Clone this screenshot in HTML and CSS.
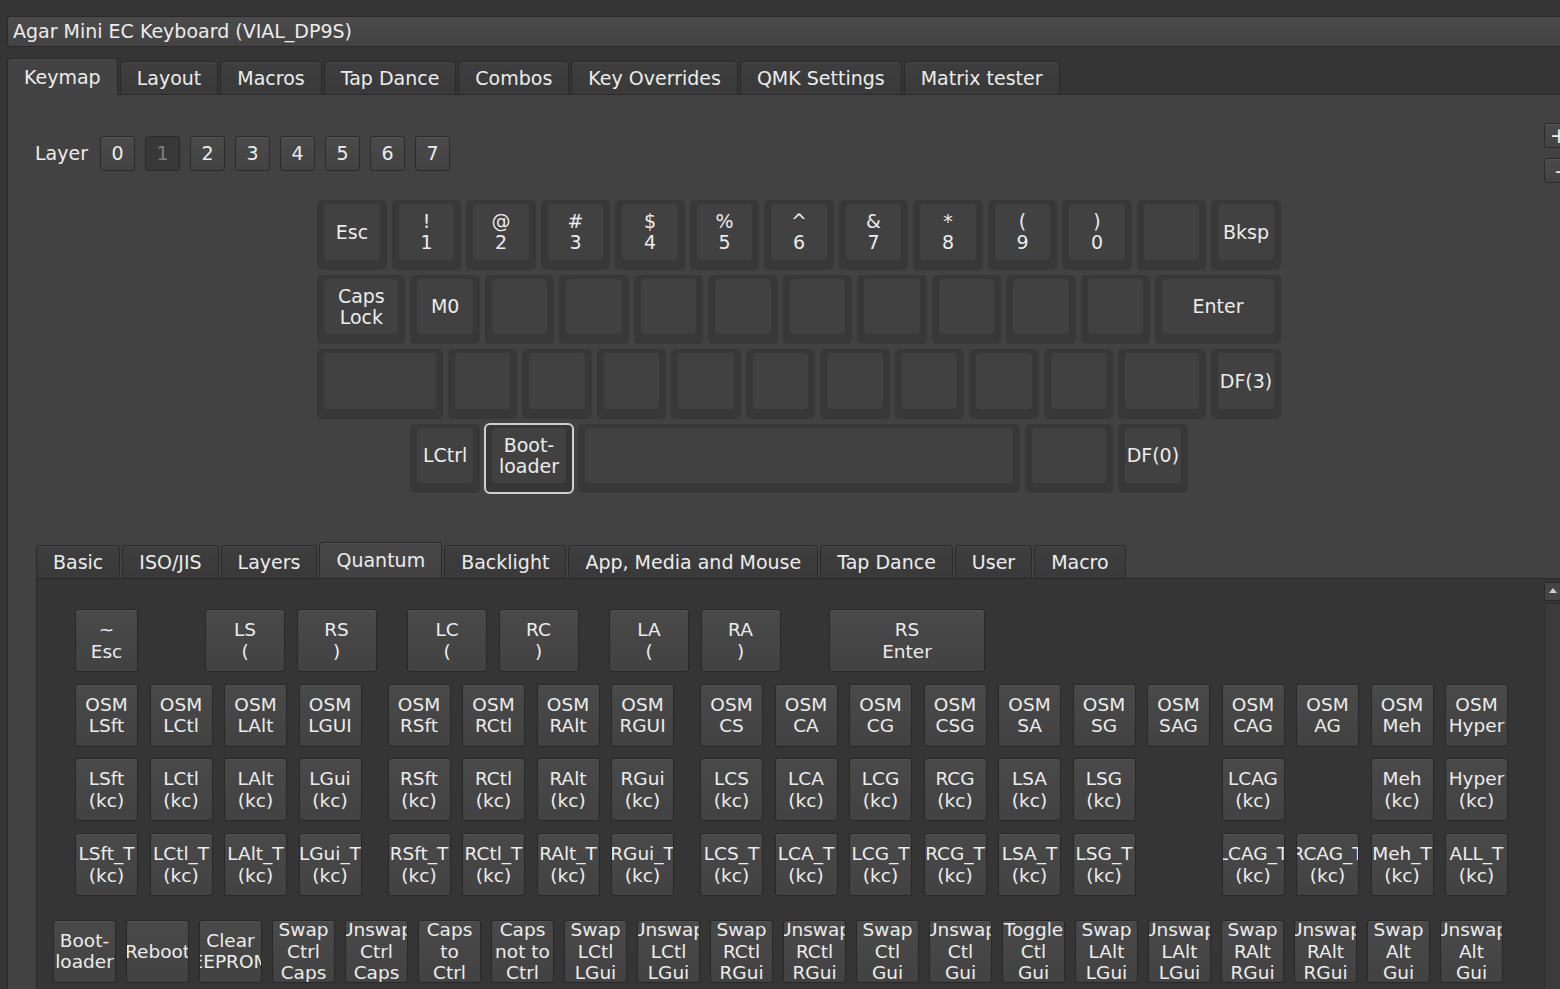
FILE: index.html
```html
<!DOCTYPE html>
<html lang="en">
  <head>
    <meta charset="UTF-8" />
    <meta name="viewport" content="width=device-width, initial-scale=1.0" />
    <title>Vial</title>
    <link rel="stylesheet" href="styles.css">
  </head>
  <body>
    <div class="app">
      <div class="device-select">Agar Mini EC Keyboard (VIAL_DP9S)</div>

      <div class="tabs main-tabs">
        <div class="tab active">Keymap</div>
        <div class="tab">Layout</div>
        <div class="tab">Macros</div>
        <div class="tab">Tap Dance</div>
        <div class="tab">Combos</div>
        <div class="tab">Key Overrides</div>
        <div class="tab">QMK Settings</div>
        <div class="tab">Matrix tester</div>
      </div>

      <div class="pane">
        <div class="layer-row">
          <div class="layers">
            <span class="layer-label">Layer</span>
            <div class="layer-btn">0</div>
            <div class="layer-btn current">1</div>
            <div class="layer-btn">2</div>
            <div class="layer-btn">3</div>
            <div class="layer-btn">4</div>
            <div class="layer-btn">5</div>
            <div class="layer-btn">6</div>
            <div class="layer-btn">7</div>
          </div>
          <div class="zoom">
            <div class="zoom-btn">+</div>
            <div class="zoom-btn">-</div>
          </div>
        </div>

        <!-- keyboard layout, 1u = 74.5px -->
        <div class="keyboard">
          <div class="krow">
            <div class="key"><div class="cap">Esc</div></div>
            <div class="key"><div class="cap">!<br>1</div></div>
            <div class="key"><div class="cap">@<br>2</div></div>
            <div class="key"><div class="cap">#<br>3</div></div>
            <div class="key"><div class="cap">$<br>4</div></div>
            <div class="key"><div class="cap">%<br>5</div></div>
            <div class="key"><div class="cap">^<br>6</div></div>
            <div class="key"><div class="cap">&amp;<br>7</div></div>
            <div class="key"><div class="cap">*<br>8</div></div>
            <div class="key"><div class="cap">(<br>9</div></div>
            <div class="key"><div class="cap">)<br>0</div></div>
            <div class="key"><div class="cap"></div></div>
            <div class="key"><div class="cap">Bksp</div></div>
          </div>
          <div class="krow">
            <div class="key u125"><div class="cap">Caps<br>Lock</div></div>
            <div class="key"><div class="cap">M0</div></div>
            <div class="key"><div class="cap"></div></div>
            <div class="key"><div class="cap"></div></div>
            <div class="key"><div class="cap"></div></div>
            <div class="key"><div class="cap"></div></div>
            <div class="key"><div class="cap"></div></div>
            <div class="key"><div class="cap"></div></div>
            <div class="key"><div class="cap"></div></div>
            <div class="key"><div class="cap"></div></div>
            <div class="key"><div class="cap"></div></div>
            <div class="key u175"><div class="cap">Enter</div></div>
          </div>
          <div class="krow">
            <div class="key u175"><div class="cap"></div></div>
            <div class="key"><div class="cap"></div></div>
            <div class="key"><div class="cap"></div></div>
            <div class="key"><div class="cap"></div></div>
            <div class="key"><div class="cap"></div></div>
            <div class="key"><div class="cap"></div></div>
            <div class="key"><div class="cap"></div></div>
            <div class="key"><div class="cap"></div></div>
            <div class="key"><div class="cap"></div></div>
            <div class="key"><div class="cap"></div></div>
            <div class="key u125"><div class="cap"></div></div>
            <div class="key"><div class="cap">DF(3)</div></div>
          </div>
          <div class="krow offset">
            <div class="key"><div class="cap">LCtrl</div></div>
            <div class="key u125 sel"><div class="cap">Boot-<br>loader</div></div>
            <div class="key u6"><div class="cap"></div></div>
            <div class="key u125"><div class="cap"></div></div>
            <div class="key"><div class="cap">DF(0)</div></div>
          </div>
        </div>

        <div class="picker">
          <div class="tabs sub-tabs">
            <div class="tab">Basic</div>
            <div class="tab">ISO/JIS</div>
            <div class="tab">Layers</div>
            <div class="tab active">Quantum</div>
            <div class="tab">Backlight</div>
            <div class="tab">App, Media and Mouse</div>
            <div class="tab">Tap Dance</div>
            <div class="tab">User</div>
            <div class="tab">Macro</div>
          </div>
          <div class="picker-pane">
            <div class="picker-body">
              <div class="qrow first">
                <div class="qk"><span>~<br>Esc</span></div>
                <div class="qk w80 m-ls"><span>LS<br>(</span></div>
                <div class="qk w80"><span>RS<br>)</span></div>
                <div class="qk w80 m-grp"><span>LC<br>(</span></div>
                <div class="qk w80"><span>RC<br>)</span></div>
                <div class="qk w80 m-grp"><span>LA<br>(</span></div>
                <div class="qk w80"><span>RA<br>)</span></div>
                <div class="qk w156 m-ent"><span>RS<br>Enter</span></div>
              </div>
              <div class="qrow">
                <div class="qk"><span>OSM<br>LSft</span></div>
                <div class="qk"><span>OSM<br>LCtl</span></div>
                <div class="qk"><span>OSM<br>LAlt</span></div>
                <div class="qk"><span>OSM<br>LGUI</span></div>
                <div class="qk gs"><span>OSM<br>RSft</span></div>
                <div class="qk"><span>OSM<br>RCtl</span></div>
                <div class="qk"><span>OSM<br>RAlt</span></div>
                <div class="qk"><span>OSM<br>RGUI</span></div>
                <div class="qk gs"><span>OSM<br>CS</span></div>
                <div class="qk"><span>OSM<br>CA</span></div>
                <div class="qk"><span>OSM<br>CG</span></div>
                <div class="qk"><span>OSM<br>CSG</span></div>
                <div class="qk"><span>OSM<br>SA</span></div>
                <div class="qk"><span>OSM<br>SG</span></div>
                <div class="qk"><span>OSM<br>SAG</span></div>
                <div class="qk"><span>OSM<br>CAG</span></div>
                <div class="qk"><span>OSM<br>AG</span></div>
                <div class="qk"><span>OSM<br>Meh</span></div>
                <div class="qk"><span>OSM<br>Hyper</span></div>
              </div>
              <div class="qrow">
                <div class="qk"><span>LSft<br>(kc)</span></div>
                <div class="qk"><span>LCtl<br>(kc)</span></div>
                <div class="qk"><span>LAlt<br>(kc)</span></div>
                <div class="qk"><span>LGui<br>(kc)</span></div>
                <div class="qk gs"><span>RSft<br>(kc)</span></div>
                <div class="qk"><span>RCtl<br>(kc)</span></div>
                <div class="qk"><span>RAlt<br>(kc)</span></div>
                <div class="qk"><span>RGui<br>(kc)</span></div>
                <div class="qk gs"><span>LCS<br>(kc)</span></div>
                <div class="qk"><span>LCA<br>(kc)</span></div>
                <div class="qk"><span>LCG<br>(kc)</span></div>
                <div class="qk"><span>RCG<br>(kc)</span></div>
                <div class="qk"><span>LSA<br>(kc)</span></div>
                <div class="qk"><span>LSG<br>(kc)</span></div>
                <div class="qk blank"></div>
                <div class="qk"><span>LCAG<br>(kc)</span></div>
                <div class="qk blank"></div>
                <div class="qk"><span>Meh<br>(kc)</span></div>
                <div class="qk"><span>Hyper<br>(kc)</span></div>
              </div>
              <div class="qrow">
                <div class="qk"><span>LSft_T<br>(kc)</span></div>
                <div class="qk"><span>LCtl_T<br>(kc)</span></div>
                <div class="qk"><span>LAlt_T<br>(kc)</span></div>
                <div class="qk"><span>LGui_T<br>(kc)</span></div>
                <div class="qk gs"><span>RSft_T<br>(kc)</span></div>
                <div class="qk"><span>RCtl_T<br>(kc)</span></div>
                <div class="qk"><span>RAlt_T<br>(kc)</span></div>
                <div class="qk"><span>RGui_T<br>(kc)</span></div>
                <div class="qk gs"><span>LCS_T<br>(kc)</span></div>
                <div class="qk"><span>LCA_T<br>(kc)</span></div>
                <div class="qk"><span>LCG_T<br>(kc)</span></div>
                <div class="qk"><span>RCG_T<br>(kc)</span></div>
                <div class="qk"><span>LSA_T<br>(kc)</span></div>
                <div class="qk"><span>LSG_T<br>(kc)</span></div>
                <div class="qk blank"></div>
                <div class="qk"><span>LCAG_T<br>(kc)</span></div>
                <div class="qk"><span>RCAG_T<br>(kc)</span></div>
                <div class="qk"><span>Meh_T<br>(kc)</span></div>
                <div class="qk"><span>ALL_T<br>(kc)</span></div>
              </div>
              <div class="qrow magic">
                <div class="qk"><span>Boot-<br>loader</span></div>
                <div class="qk"><span>Reboot</span></div>
                <div class="qk"><span>Clear<br>EEPROM</span></div>
                <div class="qk"><span>Swap<br>Ctrl<br>Caps</span></div>
                <div class="qk"><span>Unswap<br>Ctrl<br>Caps</span></div>
                <div class="qk"><span>Caps<br>to<br>Ctrl</span></div>
                <div class="qk"><span>Caps<br>not to<br>Ctrl</span></div>
                <div class="qk"><span>Swap<br>LCtl<br>LGui</span></div>
                <div class="qk"><span>Unswap<br>LCtl<br>LGui</span></div>
                <div class="qk"><span>Swap<br>RCtl<br>RGui</span></div>
                <div class="qk"><span>Unswap<br>RCtl<br>RGui</span></div>
                <div class="qk"><span>Swap<br>Ctl<br>Gui</span></div>
                <div class="qk"><span>Unswap<br>Ctl<br>Gui</span></div>
                <div class="qk"><span>Toggle<br>Ctl<br>Gui</span></div>
                <div class="qk"><span>Swap<br>LAlt<br>LGui</span></div>
                <div class="qk"><span>Unswap<br>LAlt<br>LGui</span></div>
                <div class="qk"><span>Swap<br>RAlt<br>RGui</span></div>
                <div class="qk"><span>Unswap<br>RAlt<br>RGui</span></div>
                <div class="qk"><span>Swap<br>Alt<br>Gui</span></div>
                <div class="qk"><span>Unswap<br>Alt<br>Gui</span></div>
              </div>
            </div>
            <div class="scrollbar">
              <div class="sb-up"></div>
              <div class="sb-track"></div>
            </div>
          </div>
        </div>
      </div>
    </div>
  </body>
</html>
```

FILE: styles.css
```css
body {
  margin: 0;
  width: 1560px;
  height: 989px;
  overflow: hidden;
  background: #353535;
  color: #ececec;
  font-family: "DejaVu Sans", "Noto Sans", sans-serif;
  font-size: 19px;
}
.app {
  width: 1600px;
  padding: 16px 0 0 7px;
}
.device-select {
  width: 1600px;
  height: 31px;
  line-height: 29px;
  box-sizing: border-box;
  padding-left: 5px;
  border: 1px solid #2a2a2a;
  border-radius: 3px;
  background: linear-gradient(#4b4b4b, #434343);
  white-space: nowrap;
}

/* tab bars */
.tabs {
  display: flex;
  align-items: flex-end;
  gap: 2px;
  height: 36px;
}
.main-tabs {
  margin-top: 11px;
}
.tab {
  height: 33px;
  line-height: 32px;
  padding: 0 16px;
  box-sizing: border-box;
  border: 1px solid #2a2a2a;
  border-bottom: none;
  border-radius: 4px 4px 0 0;
  background: linear-gradient(#3e3e3e, #393939);
  white-space: nowrap;
  box-shadow: inset 0 1px 0 rgba(255, 255, 255, 0.05);
}
.main-tabs .tab.active {
  height: 37px;
  line-height: 36px;
  margin-bottom: -1px;
  background: #434343;
  position: relative;
  z-index: 1;
}
.sub-tabs .tab.active {
  height: 36px;
  line-height: 35px;
  background: linear-gradient(#474747, #424242);
}

/* keymap pane */
.pane {
  width: 1584px;
  height: 900px;
  box-sizing: border-box;
  padding-top: 28px;
  border: 1px solid #2a2a2a;
  background: #424242;
}
.layer-row {
  display: flex;
  justify-content: space-between;
  align-items: center;
  padding: 0 16px 0 27px;
}
.layers {
  display: flex;
  align-items: center;
  gap: 10px;
}
.layer-label {
  margin-right: 2px;
}
.layer-btn,
.zoom-btn {
  width: 35px;
  height: 35px;
  box-sizing: border-box;
  border: 1px solid #2a2a2a;
  border-radius: 3px;
  background: linear-gradient(#4a4a4a, #434343);
  box-shadow: inset 0 1px 0 rgba(255, 255, 255, 0.06);
  display: flex;
  align-items: center;
  justify-content: center;
}
.layer-btn.current {
  background: #383838;
  color: #808080;
  box-shadow: none;
}
.zoom {
  display: flex;
  flex-direction: column;
  gap: 10px;
}
.zoom-btn {
  width: 30px;
  height: 25px;
  font-size: 22px;
}

/* keyboard */
.keyboard {
  width: 963.5px;
  margin: 17px auto 0;
  display: flex;
  flex-direction: column;
  gap: 5px;
}
.krow {
  display: flex;
  gap: 5px;
}
.krow.offset {
  margin-left: 93.125px;
}
.key {
  width: 69.5px;
  height: 69.5px;
  box-sizing: border-box;
  padding: 4px 7px 10px;
  border-radius: 5px;
  background: #383838;
  display: flex;
}
.key.u125 { width: 88.125px; }
.key.u175 { width: 125.375px; }
.key.u6 { width: 442px; }
.key.sel {
  outline: 2px solid #cfcfcf;
  outline-offset: -1px;
  background: #363636;
}
.cap {
  flex: 1;
  border-radius: 4px;
  background: #414141;
  display: flex;
  align-items: center;
  justify-content: center;
  text-align: center;
  line-height: 21px;
  padding-top: 1px;
}

/* keycode picker */
.picker {
  margin: 49px 28px 0;
}
.picker-pane {
  height: 420px;
  border: 1px solid #2a2a2a;
  background: #353535;
  display: flex;
}
.picker-body {
  flex: 1;
  padding-top: 30px;
  display: flex;
  flex-direction: column;
  gap: 11.7px;
}
.qrow {
  display: flex;
  gap: 11.5px;
  margin-left: 38px;
}
.qrow.magic {
  margin: 12px 0 0 16px;
  gap: 10px;
}
.qk {
  width: 63px;
  height: 63px;
  flex: none;
  box-sizing: border-box;
  border: 1px solid #282828;
  border-radius: 3px;
  background: linear-gradient(#494949, #424242);
  box-shadow: inset 0 1px 0 rgba(255, 255, 255, 0.06);
  display: flex;
  align-items: center;
  justify-content: center;
  overflow: hidden;
  text-align: center;
  white-space: nowrap;
  font-size: 18.5px;
  line-height: 21.5px;
}
.qk span {
  flex: none;
}
.qk.blank {
  visibility: hidden;
}
.qk.w80 { width: 80px; }
.qk.w156 { width: 156px; }
.qk.m-ls { margin-left: 55.5px; }
.qk.m-grp { margin-left: 19px; }
.qk.m-ent { margin-left: 37px; }
.qk.gs { margin-left: 14.5px; }

.scrollbar {
  width: 17px;
  display: flex;
  flex-direction: column;
  padding-top: 3px;
}
.sb-up {
  height: 17px;
  border: 1px solid #2a2a2a;
  border-radius: 2px;
  background: #454545;
  position: relative;
}
.sb-up::after {
  content: "";
  position: absolute;
  left: 4px;
  top: 5px;
  border: 4px solid transparent;
  border-bottom: 5px solid #cfcfcf;
  border-top: none;
}
.sb-track {
  flex: 1;
  margin-top: 2px;
  border: 1px solid #2e2e2e;
  background: #3b3b3b;
}
```
